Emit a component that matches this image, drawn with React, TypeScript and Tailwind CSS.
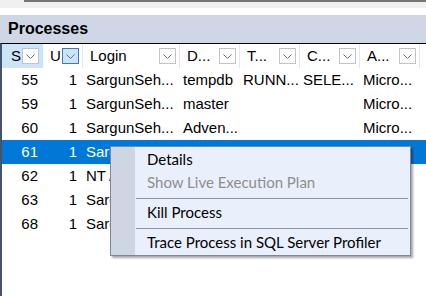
import React from "react"

type Row = {
  spid: string
  user: string
  login: string
  db: string
  task: string
  cmd: string
  app: string
  selected?: boolean
  underMenu?: boolean
}

const rows: Row[] = [
  { spid: "55", user: "1", login: "SargunSeh...", db: "tempdb", task: "RUNN...", cmd: "SELE...", app: "Micro..." },
  { spid: "59", user: "1", login: "SargunSeh...", db: "master", task: "", cmd: "", app: "Micro..." },
  { spid: "60", user: "1", login: "SargunSeh...", db: "Adven...", task: "", cmd: "", app: "Micro..." },
  { spid: "61", user: "1", login: "SargunSeh...", db: "", task: "", cmd: "", app: "", selected: true, underMenu: true },
  { spid: "62", user: "1", login: "NT AUTHO...", db: "", task: "", cmd: "", app: "", underMenu: true },
  { spid: "63", user: "1", login: "SargunSeh...", db: "", task: "", cmd: "", app: "", underMenu: true },
  { spid: "68", user: "1", login: "SargunSeh...", db: "", task: "", cmd: "", app: "", underMenu: true },
]

const columns = [
  { key: "spid", label: "S", width: "w-[41px]", pad: "pl-[9px]" },
  { key: "user", label: "U", width: "w-[40px]", pad: "pl-[7px]" },
  { key: "login", label: "Login", width: "w-[97px]", pad: "pl-[7px]" },
  { key: "db", label: "D...", width: "w-[60px]", pad: "pl-[7px]" },
  { key: "task", label: "T...", width: "w-[60px]", pad: "pl-[7px]" },
  { key: "cmd", label: "C...", width: "w-[60px]", pad: "pl-[7px]" },
  { key: "app", label: "A...", width: "w-[60px]", pad: "pl-[7px]" },
]

function Chevron() {
  return (
    <svg width="9" height="5" viewBox="0 0 9 5" fill="none">
      <path d="M0.5 0.5 L4.5 4.5 L8.5 0.5" stroke="#6b6b6b" strokeWidth="1" />
    </svg>
  )
}

function FilterButton({ active }: { active?: boolean }) {
  return (
    <div
      className={`flex h-[16px] w-[17px] items-center justify-center border ${
        active ? "border-[#3b7cbf] bg-[#cce4f7]" : "border-[#c4c4c4] bg-white"
      }`}
    >
      <Chevron />
    </div>
  )
}

export default function App() {
  return (
    <div
      className="relative h-[296px] w-[426px] overflow-hidden bg-white text-black"
      style={{ fontFamily: '"Liberation Sans", Arial, sans-serif' }}
    >
      {/* toolbar edge above the panel */}
      <div className="flex h-[8px] items-start bg-[#f0f0f0]">
        <div className="w-[24px]" />
        <div className="h-[2px] flex-1 bg-[#777777]" />
      </div>
      <div className="h-[7px] bg-white" />

      <div className="flex h-[28px] items-center bg-[#cfd6e5] pl-[8px] text-[16px] font-bold">
        Processes
      </div>

      <div className="h-full border-l-2 border-t border-l-[#46536d] border-t-black">
        {/* column headers */}
        <div className="flex h-[24px] text-[15px]">
          {columns.map((c, i) => (
            <div
              key={c.key}
              className={`flex shrink-0 items-center justify-between border-r pr-[3px] ${c.width} ${c.pad} ${
                i === 0 ? "border-r-[#cce4f7] bg-[#cce4f7]" : "border-r-[#e5e5e5]"
              }`}
            >
              <span>{c.label}</span>
              <FilterButton active={i === 1} />
            </div>
          ))}
          <div className="flex-1" />
        </div>

        {/* data rows */}
        {rows.map((r) => (
          <div
            key={r.spid}
            className={`flex h-[24px] items-center text-[15px] ${r.selected ? "bg-[#0078d7] text-white" : ""}`}
          >
            <div className="w-[41px] shrink-0 pr-[5px] text-right">{r.spid}</div>
            <div className="w-[40px] shrink-0 pr-[6px] text-right">{r.user}</div>
            {r.underMenu ? (
              // the context menu hides the rest of the row from x=110
              <div className="w-[27px] shrink-0 overflow-hidden whitespace-nowrap pl-[3px]">{r.login}</div>
            ) : (
              <>
                <div className="w-[97px] shrink-0 pl-[3px]">{r.login}</div>
                <div className="w-[60px] shrink-0 pl-[3px]">{r.db}</div>
                <div className="w-[60px] shrink-0 pl-[3px]">{r.task}</div>
                <div className="w-[60px] shrink-0 pl-[3px]">{r.cmd}</div>
                <div className="w-[60px] shrink-0 pl-[3px]">{r.app}</div>
              </>
            )}
          </div>
        ))}
      </div>

      {/* context menu */}
      <div
        className="absolute left-[110px] top-[146px] flex w-[301px] border border-[#7f889b] bg-[#e9effb] text-[15px] shadow-[2px_2px_2px_rgba(0,0,0,0.35)]"
        style={{ fontFamily: '"Lato", "Noto Sans", sans-serif' }}
      >
        <div className="w-[24px] shrink-0 bg-[#ced5e3]" />
        <div className="flex flex-1 flex-col py-[1px]">
          <div className="flex h-[23px] items-center pl-[12px]">Details</div>
          <div className="flex h-[23px] items-center pl-[12px] text-[#8e8e8e]">Show Live Execution Plan</div>
          <div className="h-[7px] pt-[4px] pr-[2px] pl-[1px]">
            <div className="h-px bg-[#8d95a7]" />
          </div>
          <div className="flex h-[23px] items-center pl-[12px]">Kill Process</div>
          <div className="h-[7px] pt-[4px] pr-[2px] pl-[1px]">
            <div className="h-px bg-[#8d95a7]" />
          </div>
          <div className="flex h-[23px] items-center pl-[12px]">Trace Process in SQL Server Profiler</div>
        </div>
      </div>
    </div>
  )
}
